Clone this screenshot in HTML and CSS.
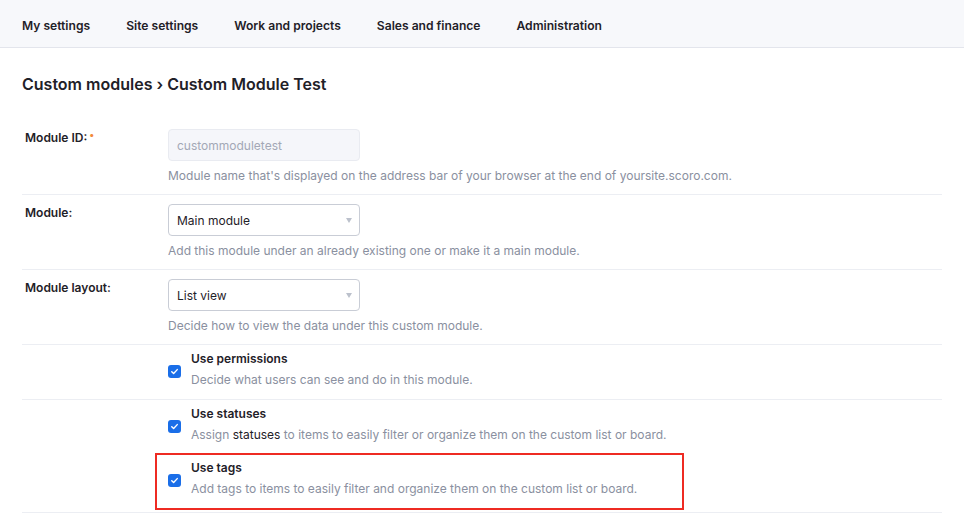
FILE: index.html
```html
<!DOCTYPE html>
<html lang="en">
<head>
  <meta charset="UTF-8">
  <title>Custom Module Test</title>
  <link rel="stylesheet" href="styles.css">
</head>
<body>
  <nav class="topnav">
    <a href="#">My settings</a>
    <a href="#">Site settings</a>
    <a href="#">Work and projects</a>
    <a href="#">Sales and finance</a>
    <a href="#">Administration</a>
  </nav>

  <main class="page">
    <h1 class="title">Custom modules › Custom Module Test</h1>

    <div class="form">
      <div class="row">
        <div class="label">Module ID:<span class="req">•</span></div>
        <div class="field">
          <div class="input disabled">custommoduletest</div>
          <div class="hint">Module name that's displayed on the address bar of your browser at the end of yoursite.scoro.com.</div>
        </div>
      </div>

      <div class="row">
        <div class="label">Module:</div>
        <div class="field">
          <div class="input select">Main module<span class="caret"></span></div>
          <div class="hint">Add this module under an already existing one or make it a main module.</div>
        </div>
      </div>

      <div class="row">
        <div class="label">Module layout:</div>
        <div class="field">
          <div class="input select">List view<span class="caret"></span></div>
          <div class="hint">Decide how to view the data under this custom module.</div>
        </div>
      </div>

      <div class="row check-row">
        <div class="label"></div>
        <div class="field check">
          <span class="box"><svg viewBox="0 0 14 14" width="14" height="14"><path d="M3.5 7.2l2.4 2.4 4.6-5" fill="none" stroke="#fff" stroke-width="1.8" stroke-linecap="round" stroke-linejoin="round"/></svg></span>
          <div>
            <div class="check-title">Use permissions</div>
            <div class="hint">Decide what users can see and do in this module.</div>
          </div>
        </div>
      </div>

      <div class="row check-row no-line">
        <div class="label"></div>
        <div class="field check">
          <span class="box"><svg viewBox="0 0 14 14" width="14" height="14"><path d="M3.5 7.2l2.4 2.4 4.6-5" fill="none" stroke="#fff" stroke-width="1.8" stroke-linecap="round" stroke-linejoin="round"/></svg></span>
          <div>
            <div class="check-title">Use statuses</div>
            <div class="hint">Assign <span class="dark">statuses</span> to items to easily filter or organize them on the custom list or board.</div>
          </div>
        </div>
      </div>

      <div class="row check-row last">
        <div class="label"></div>
        <div class="field check">
          <span class="box"><svg viewBox="0 0 14 14" width="14" height="14"><path d="M3.5 7.2l2.4 2.4 4.6-5" fill="none" stroke="#fff" stroke-width="1.8" stroke-linecap="round" stroke-linejoin="round"/></svg></span>
          <div>
            <div class="check-title">Use tags</div>
            <div class="hint">Add tags to items to easily filter and organize them on the custom list or board.</div>
          </div>
        </div>
        <span class="highlight"></span>
      </div>
    </div>
  </main>
</body>
</html>
```

FILE: styles.css
```css
* {
  font-family: 'Inter', 'Liberation Sans', sans-serif;
  box-sizing: border-box;
}

body {
  margin: 0;
  background-color: #ffffff;
  color: #1f2128;
}

.topnav {
  display: flex;
  gap: 36px;
  height: 48px;
  padding: 3px 22px 0;
  align-items: center;
  background-color: #f7f8fb;
  border-bottom: 1px solid #e3e5ec;
}

.topnav a {
  color: #1f2128;
  text-decoration: none;
  font-size: 12.1px;
  font-weight: 600;
}

.page {
  padding: 0 22px;
}

.title {
  margin: 26px 0 26px;
  font-size: 16px;
  font-weight: 600;
  line-height: 20px;
}

.form {
  width: 920px;
}

.row {
  display: flex;
  padding: 9px 0 9px;
  border-bottom: 1px solid #eceef3;
  position: relative;
}

.row.no-line {
  border-bottom: none;
}

.label {
  width: 146px;
  padding: 2px 0 0 3px;
  font-size: 12px;
  font-weight: 600;
  line-height: 14px;
}

.req {
  color: #f28a3c;
  font-size: 10px;
  vertical-align: top;
  margin-left: 2px;
  position: relative;
  top: -4px;
}

.input {
  width: 192px;
  height: 32px;
  padding: 0 8px;
  display: flex;
  align-items: center;
  font-size: 12px;
  border-radius: 4px;
  border: 1px solid #c9cdd6;
  position: relative;
}

.input.disabled {
  background-color: #f5f6fa;
  border-color: #e9ebf1;
  color: #a3a8b6;
}

.caret {
  position: absolute;
  right: 7px;
  top: 13px;
  border-left: 3.5px solid transparent;
  border-right: 3.5px solid transparent;
  border-top: 5px solid #bcc1cc;
}

.hint {
  margin-top: 6px;
  font-size: 12px;
  line-height: 18px;
  color: #8a90a0;
}

.hint .dark {
  color: #1f2128;
}

.check-row {
  padding: 6px 0 10px;
}

.check-row.last {
  padding-bottom: 14px;
}

.check {
  display: flex;
  align-items: center;
  gap: 10px;
}

.check .hint {
  margin-top: 4px;
}

.box {
  width: 13px;
  height: 13px;
  border-radius: 3px;
  background-color: #1a6ee8;
  display: flex;
  align-items: center;
  justify-content: center;
  margin-top: 3px;
}

.box svg {
  width: 11px;
  height: 11px;
}

.check-title {
  font-size: 12px;
  font-weight: 600;
  line-height: 16px;
}

.highlight {
  position: absolute;
  left: 133px;
  top: -1px;
  width: 529px;
  height: 57px;
  border: 2px solid #ee2b23;
}
```
